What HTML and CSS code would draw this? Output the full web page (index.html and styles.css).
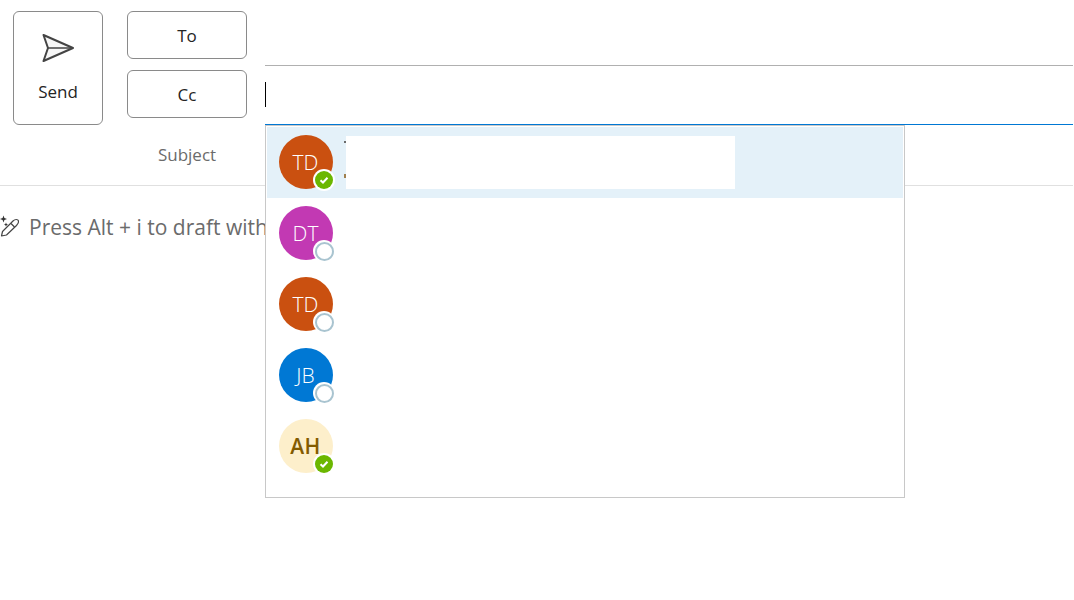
FILE: index.html
```html
<!DOCTYPE html>
<html lang="en">
<head>
    <meta charset="UTF-8">
    <meta name="viewport" content="width=device-width, initial-scale=1.0">
    <title>New message</title>
    <link rel="stylesheet" href="styles.css">
</head>
<body>
    <div class="compose">
        <div class="header">
            <div class="send-col">
                <button class="send-btn">
                    <svg class="send-icon" width="34" height="30" viewBox="0 0 34 30" fill="none">
                        <path d="M2.5 2 L32 15 L2.5 28 L7 15 Z" fill="#f7f7f7" stroke="#444" stroke-width="2" stroke-linejoin="round"/>
                        <path d="M7 15 H32" stroke="#444" stroke-width="1.5"/>
                    </svg>
                    <span>Send</span>
                </button>
            </div>
            <div class="label-col">
                <button class="addr-btn">To</button>
                <button class="addr-btn">Cc</button>
                <div class="subject-label">Subject</div>
            </div>
            <div class="field-col">
                <div class="field-to"></div>
                <div class="field-cc"><span class="caret"></span></div>
            </div>
        </div>

        <div class="draft-hint">
            <svg class="wand-icon" width="20" height="24" viewBox="0 0 20 24" fill="none">
                <path d="M3.5 0.5 L4.4 3 L7 4 L4.4 5 L3.5 7.5 L2.6 5 L0 4 L2.6 3 Z" fill="#333"/>
                <path d="M6 7.5 L6.6 9 L8 9.6 L6.6 10.2 L6 11.5 L5.4 10.2 L4 9.6 L5.4 9 Z" fill="#333"/>
                <path d="M1.5 21 L2.5 16.5 L13 6 C15 4 18 4 18.5 6 C19 8 18 9 16.5 10.5 L6.5 20 Z" stroke="#444" stroke-width="1.2" stroke-linejoin="round"/>
                <path d="M11 8.5 L14.5 12" stroke="#444" stroke-width="1.2"/>
            </svg>
            <span>Press Alt + i to draft with</span>
        </div>
    </div>

    <div class="suggestions">
        <div class="person selected">
            <div class="avatar orange">TD
                <span class="status online"><svg width="10" height="10" viewBox="0 0 10 10" fill="none"><path d="M1.5 5.2 L4 7.5 L8.5 2.8" stroke="#fff" stroke-width="2"/></svg></span>
            </div>
            <div class="redacted-edge"></div>
            <div class="redacted"></div>
        </div>
        <div class="person">
            <div class="avatar magenta">DT<span class="status offline"></span></div>
        </div>
        <div class="person">
            <div class="avatar orange">TD<span class="status offline"></span></div>
        </div>
        <div class="person">
            <div class="avatar blue">JB<span class="status offline"></span></div>
        </div>
        <div class="person">
            <div class="avatar cream">AH
                <span class="status online"><svg width="10" height="10" viewBox="0 0 10 10" fill="none"><path d="M1.5 5.2 L4 7.5 L8.5 2.8" stroke="#fff" stroke-width="2"/></svg></span>
            </div>
        </div>
    </div>
</body>
</html>
```

FILE: styles.css
```css
body {
    margin: 0;
    background: white;
    font-family: 'Open Sans', 'Noto Sans', sans-serif;
    color: #242424;
    overflow: hidden;
}
button {
    font-family: inherit;
    background: white;
    color: #242424;
    cursor: pointer;
}
.compose {
    width: 1073px;
}
.header {
    display: flex;
    height: 185px;
    border-bottom: 1px solid #e0e0e0;
}
.send-col {
    width: 90px;
    padding: 11px 0 0 13px;
}
.send-btn {
    width: 90px;
    height: 114px;
    border: 1px solid #8a8a8a;
    border-radius: 6px;
    padding: 21px 0 0;
    font-size: 17px;
    display: flex;
    flex-direction: column;
    align-items: center;
}
.send-btn span {
    margin-top: 17px;
}
.send-icon {
    display: block;
}
.label-col {
    width: 120px;
    margin-left: 24px;
    margin-right: 18px;
    padding-top: 11px;
}
.addr-btn {
    display: block;
    width: 120px;
    height: 48px;
    margin-bottom: 11px;
    border: 1px solid #8a8a8a;
    border-radius: 6px;
    font-size: 17px;
    padding: 1px 0 0;
}
.subject-label {
    margin-top: 26px;
    font-size: 17px;
    line-height: 22px;
    text-align: center;
    color: #6b6b6b;
}
.field-col {
    flex: 1;
}
.field-to {
    height: 65px;
    border-bottom: 1px solid #b0b0b0;
}
.field-cc {
    height: 58px;
    border-bottom: 1px solid #0078d4;
    display: flex;
    align-items: center;
}
.caret {
    width: 1px;
    height: 25px;
    margin-bottom: 2px;
    background: black;
}
.draft-hint {
    display: flex;
    align-items: center;
    height: 82px;
    font-size: 21px;
    color: #6b6b6b;
}
.wand-icon {
    margin-right: 9px;
}
.suggestions {
    position: absolute;
    left: 265px;
    top: 125px;
    width: 640px;
    height: 373px;
    padding: 1px;
    border: 1px solid #c8c8c8;
    background: white;
    box-sizing: border-box;
}
.person {
    position: relative;
    height: 71px;
    display: flex;
    align-items: flex-start;
    padding: 8px 0 0 12px;
    box-sizing: border-box;
}
.person.selected {
    background: #e4f1f9;
}
.avatar {
    position: relative;
    width: 54px;
    height: 54px;
    border-radius: 50%;
    color: white;
    font-size: 21px;
    font-weight: 300;
    display: flex;
    align-items: center;
    justify-content: center;
    text-indent: -1px;
}
.orange { background: #ca5010; }
.magenta { background: #c239b3; }
.blue { background: #0078d4; }
.cream { background: #fdefcb; color: #835b00; font-weight: 600; letter-spacing: 0.5px; }
.status {
    position: absolute;
    right: -2px;
    bottom: -2px;
    width: 22px;
    height: 22px;
    border-radius: 50%;
    background: white;
    display: flex;
    align-items: center;
    justify-content: center;
    text-indent: 0;
}
.status.online::before {
    content: "";
    position: absolute;
    inset: 2px;
    border-radius: 50%;
    background: #6bb700;
}
.status.online svg {
    position: relative;
}
.status.offline::before {
    content: "";
    width: 15px;
    height: 15px;
    border: 2px solid #a9c4d0;
    border-radius: 50%;
}
.redacted {
    position: absolute;
    left: 79px;
    top: 9px;
    width: 389px;
    height: 53px;
    background: white;
}
.redacted-edge {
    position: absolute;
    left: 77px;
    top: 14px;
    width: 2px;
    height: 37px;
    border-top: 2px solid #6b6b6b;
    border-bottom: 4px solid #a08050;
    box-sizing: border-box;
}
```
